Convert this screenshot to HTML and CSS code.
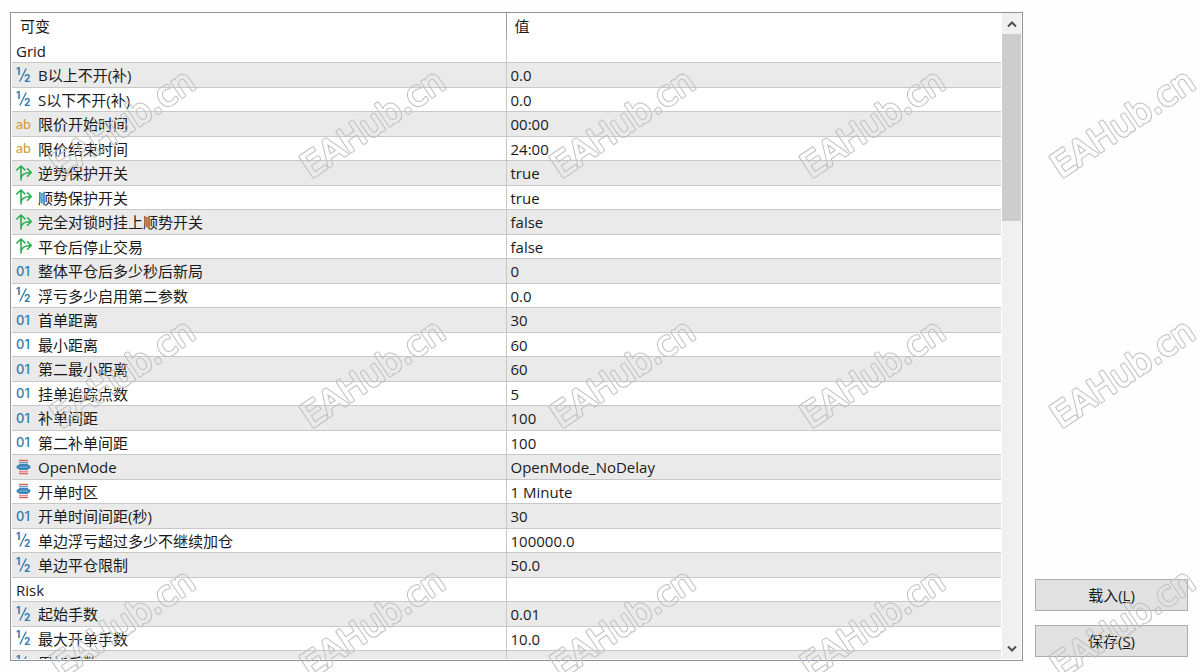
FILE: index.html
```html
<!DOCTYPE html>
<html lang="zh-CN">
<head>
    <meta charset="UTF-8">
    <meta name="viewport" content="width=device-width, initial-scale=1.0">
    <title>EAHub</title>
    <link rel="stylesheet" href="styles.css">
</head>
<body>
    <!-- 图标定义 -->
    <svg class="defs" aria-hidden="true">
        <symbol id="icon-half" viewBox="0 0 16 16">
            <text class="digit" x="0" y="8">1</text>
            <text class="digit" x="8" y="15">2</text>
            <path d="M3.800 14.500L10.200 1.500" stroke="#2f7cb0" stroke-width="1.300"/>
        </symbol>
        <symbol id="icon-bool" viewBox="0 0 16 16">
            <path d="M5 15V2M.8 5l4.200-4 4 4M5 13.500C5.500 9.500 8 7.500 15 7.500M11.500 3.800l3.700 3.700-3.700 3.700" fill="none" stroke="#22b04a" stroke-width="1.600" stroke-linecap="round" stroke-linejoin="round"/>
        </symbol>
        <symbol id="icon-enum" viewBox="0 0 16 16">
            <path d="M3 1.500h9M3 14.500h9" stroke="#e0615d" stroke-width="1.300"/>
            <path d="M3 12.500h9" stroke="#e58a86" stroke-width="1.300"/>
            <path d="M3 3.700h9" stroke="#5a9ac4" stroke-width="1.300"/>
            <path d="M3 5.500h9M3 10.500h9" stroke="#3f87b8" stroke-width="1"/>
            <rect x=".5" y="6" width="14" height="4" rx="2" fill="#3a86b8"/>
            <path d="M3 8h9" stroke="#7fb6da" stroke-width="1"/>
        </symbol>
    </svg>

    <main class="panel">
        <div class="list">
            <table class="params">
                <thead>
                    <tr><th>可变</th><th>值</th></tr>
                </thead>
                <tbody>
                    <tr><td>Grid</td><td></td></tr>
                    <tr><td><svg class="icon"><use href="#icon-half"/></svg>B以上不开(补)</td><td>0.0</td></tr>
                    <tr><td><svg class="icon"><use href="#icon-half"/></svg>S以下不开(补)</td><td>0.0</td></tr>
                    <tr><td><span class="icon str">ab</span>限价开始时间</td><td>00:00</td></tr>
                    <tr><td><span class="icon str">ab</span>限价结束时间</td><td>24:00</td></tr>
                    <tr><td><svg class="icon"><use href="#icon-bool"/></svg>逆势保护开关</td><td>true</td></tr>
                    <tr><td><svg class="icon"><use href="#icon-bool"/></svg>顺势保护开关</td><td>true</td></tr>
                    <tr><td><svg class="icon"><use href="#icon-bool"/></svg>完全对锁时挂上顺势开关</td><td>false</td></tr>
                    <tr><td><svg class="icon"><use href="#icon-bool"/></svg>平仓后停止交易</td><td>false</td></tr>
                    <tr><td><span class="icon int">01</span>整体平仓后多少秒后新局</td><td>0</td></tr>
                    <tr><td><svg class="icon"><use href="#icon-half"/></svg>浮亏多少启用第二参数</td><td>0.0</td></tr>
                    <tr><td><span class="icon int">01</span>首单距离</td><td>30</td></tr>
                    <tr><td><span class="icon int">01</span>最小距离</td><td>60</td></tr>
                    <tr><td><span class="icon int">01</span>第二最小距离</td><td>60</td></tr>
                    <tr><td><span class="icon int">01</span>挂单追踪点数</td><td>5</td></tr>
                    <tr><td><span class="icon int">01</span>补单间距</td><td>100</td></tr>
                    <tr><td><span class="icon int">01</span>第二补单间距</td><td>100</td></tr>
                    <tr><td><svg class="icon"><use href="#icon-enum"/></svg>OpenMode</td><td>OpenMode_NoDelay</td></tr>
                    <tr><td><svg class="icon"><use href="#icon-enum"/></svg>开单时区</td><td>1 Minute</td></tr>
                    <tr><td><span class="icon int">01</span>开单时间间距(秒)</td><td>30</td></tr>
                    <tr><td><svg class="icon"><use href="#icon-half"/></svg>单边浮亏超过多少不继续加仓</td><td>100000.0</td></tr>
                    <tr><td><svg class="icon"><use href="#icon-half"/></svg>单边平仓限制</td><td>50.0</td></tr>
                    <tr><td>Risk</td><td></td></tr>
                    <tr><td><svg class="icon"><use href="#icon-half"/></svg>起始手数</td><td>0.01</td></tr>
                    <tr><td><svg class="icon"><use href="#icon-half"/></svg>最大开单手数</td><td>10.0</td></tr>
                    <tr><td><svg class="icon"><use href="#icon-half"/></svg>累加手数</td><td>0.0</td></tr>
                </tbody>
            </table>
        </div>

        <!-- 滚动条 -->
        <div class="scrollbar">
            <button class="arrow" type="button" aria-label="向上滚动">
                <svg viewBox="0 0 10 8"><path d="M1 6.500l4-4 4 4"/></svg>
            </button>
            <div class="track"><div class="thumb"></div></div>
            <button class="arrow" type="button" aria-label="向下滚动">
                <svg viewBox="0 0 10 8"><path d="M1 1.500l4 4 4-4"/></svg>
            </button>
        </div>
    </main>

    <aside class="actions">
        <button class="btn" type="button" accesskey="l">载入(<u>L</u>)</button>
        <button class="btn" type="button" accesskey="s">保存(<u>S</u>)</button>
    </aside>

    <!-- 水印 -->
    <svg class="watermark" aria-hidden="true">
        <defs>
            <mask id="wm-mask" maskUnits="userSpaceOnUse" x="-10" y="-50" width="220" height="80">
                <rect x="-10" y="-50" width="220" height="80" fill="#fff"/>
                <text class="wm-inner">EAHub.cn</text>
            </mask>
            <pattern id="wm" patternUnits="userSpaceOnUse" x="40" y="60" width="250" height="250">
                <g transform="translate(21 119) rotate(-34)">
                    <g mask="url(#wm-mask)"><text class="wm-outer">EAHub.cn</text></g>
                </g>
            </pattern>
        </defs>
        <rect width="100%" height="100%" fill="url(#wm)"/>
    </svg>
</body>
</html>
```

FILE: styles.css
```css
:root {
    --border: #8f959f;
    --line: #c8c8c8;
    --stripe: #eaeaea;
    --blue: #2f7cb0;
    --gold: #d0a040;
}

* {
    margin: 0;
    padding: 0;
    box-sizing: border-box;
}

body {
    position: relative;
    display: flex;
    gap: 12px;
    height: 100vh;
    padding: 12px 12px 11px 10px;
    overflow: hidden;
    background: #fefefe;
    color: #1a1a1a;
    font-family: "Open Sans", "Noto Sans CJK SC", sans-serif;
    font-size: 15px;
}

.defs {
    position: absolute;
    width: 0;
    height: 0;
}

.panel {
    display: flex;
    flex: 1;
    gap: 1px;
    min-width: 0;
    padding: 0 1px 1px;
    border: 1px solid var(--border);
    background: #fff;
}

.list {
    flex: 1;
    min-width: 0;
    overflow: hidden;
}

/* 参数表 */
.params {
    width: 100%;
    table-layout: fixed;
    border-spacing: 0;
}

.params th {
    height: 26px;
    padding: 0 8px;
    font-weight: normal;
    line-height: 22px;
    text-align: left;
}

.params th:first-child {
    width: 50%;
    border-right: 1px solid #a0a0a0;
}

.params td {
    height: 24px;
    padding: 0 4px;
    border-bottom: 1px solid var(--line);
    line-height: 22px;
    white-space: nowrap;
}

.params td:first-child {
    border-right: 1px solid var(--line);
}

.params tr:nth-child(even) td {
    height: 25px;
    background: var(--stripe);
}

.icon {
    display: inline-block;
    width: 16px;
    height: 16px;
    margin: -4px 6px 0 0;
    line-height: 16px;
    vertical-align: middle;
}

.digit {
    fill: var(--blue);
    font-family: Inter, sans-serif;
    font-size: 10px;
    font-weight: bold;
}

.int {
    color: var(--blue);
    font-family: Inter, sans-serif;
    font-size: 13px;
    font-weight: 500;
}

.str {
    color: var(--gold);
    font-family: Lato, sans-serif;
    font-size: 14px;
    font-weight: 500;
}

/* 滚动条 */
.scrollbar {
    display: flex;
    flex-direction: column;
    width: 19px;
    background: #f0f0f0;
}

.arrow {
    display: flex;
    align-items: center;
    justify-content: center;
    height: 21px;
    border: 0;
    background: none;
}

.arrow svg {
    width: 10px;
    height: 8px;
    fill: none;
    stroke: #505050;
    stroke-width: 2;
}

.track {
    flex: 1;
}

.thumb {
    height: 31%;
    background: #cdcdcd;
}

/* 按钮 */
.actions {
    display: flex;
    flex-direction: column;
    justify-content: flex-end;
    gap: 14px;
    width: 153px;
    padding-bottom: 4px;
}

.btn {
    height: 32px;
    padding-bottom: 2px;
    border: 1px solid #adadad;
    background: #e1e1e1;
    color: #1a1a1a;
    font: inherit;
}

/* 水印 */
.watermark {
    position: absolute;
    top: 0;
    left: 0;
    width: 100%;
    height: 100%;
    pointer-events: none;
}

.watermark text {
    font-family: "DejaVu Sans", sans-serif;
    font-size: 34px;
    stroke-linejoin: round;
}

.wm-outer {
    fill: #c0c0c0;
    stroke: #c0c0c0;
    stroke-width: 3px;
}

.wm-inner {
    fill: #000;
    stroke: #000;
    stroke-width: 1px;
}
```
